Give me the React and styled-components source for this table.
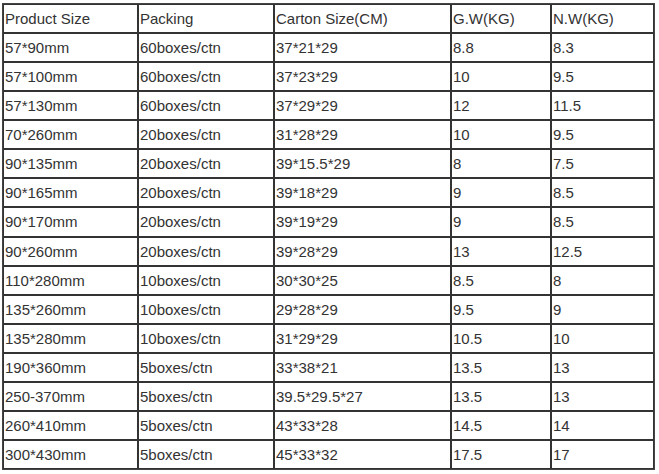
import React from "react";
import styled, { createGlobalStyle } from "styled-components";

const Global = createGlobalStyle`
  html, body { margin: 0; padding: 0; background: #fff; }
  body { padding: 3px 0 0 2px; font-family: "Liberation Sans", Arial, sans-serif; }
`;

const Table = styled.table`
  border-collapse: separate;
  border-spacing: 0;
  border: 1px solid #444;
  table-layout: fixed;
  width: 653px;
  height: 467px;
  color: #333;
  font-size: 15px;
`;

const Cell = styled.td`
  box-sizing: border-box;
  border: 1px solid #333;
  height: 29px;
  padding: 0 0 0 1px;
  vertical-align: middle;
  white-space: nowrap;
  overflow: hidden;
  line-height: 17px;
`;

const widths = [135, 136, 177, 100, 103];

const rows = [
  ["Product Size", "Packing", "Carton Size(CM)", "G.W(KG)", "N.W(KG)"],
  ["57*90mm", "60boxes/ctn", "37*21*29", "8.8", "8.3"],
  ["57*100mm", "60boxes/ctn", "37*23*29", "10", "9.5"],
  ["57*130mm", "60boxes/ctn", "37*29*29", "12", "11.5"],
  ["70*260mm", "20boxes/ctn", "31*28*29", "10", "9.5"],
  ["90*135mm", "20boxes/ctn", "39*15.5*29", "8", "7.5"],
  ["90*165mm", "20boxes/ctn", "39*18*29", "9", "8.5"],
  ["90*170mm", "20boxes/ctn", "39*19*29", "9", "8.5"],
  ["90*260mm", "20boxes/ctn", "39*28*29", "13", "12.5"],
  ["110*280mm", "10boxes/ctn", "30*30*25", "8.5", "8"],
  ["135*260mm", "10boxes/ctn", "29*28*29", "9.5", "9"],
  ["135*280mm", "10boxes/ctn", "31*29*29", "10.5", "10"],
  ["190*360mm", "5boxes/ctn", "33*38*21", "13.5", "13"],
  ["250-370mm", "5boxes/ctn", "39.5*29.5*27", "13.5", "13"],
  ["260*410mm", "5boxes/ctn", "43*33*28", "14.5", "14"],
  ["300*430mm", "5boxes/ctn", "45*33*32", "17.5", "17"],
];

export default function App() {
  return (
    <>
      <Global />
      <Table>
        <colgroup>
          {widths.map((w, i) => (
            <col key={i} style={{ width: w }} />
          ))}
        </colgroup>
        <tbody>
          {rows.map((r, i) => (
            <tr key={i}>
              {r.map((c, j) => (
                <Cell key={j}>{c}</Cell>
              ))}
            </tr>
          ))}
        </tbody>
      </Table>
    </>
  );
}
